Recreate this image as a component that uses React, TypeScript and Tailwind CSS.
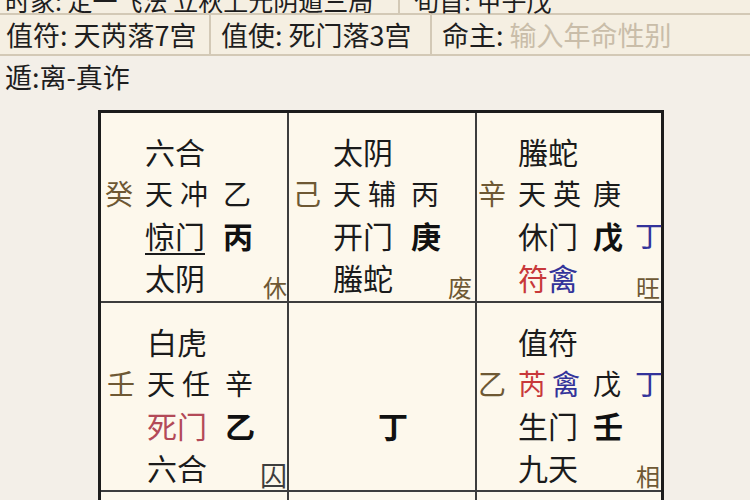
import type { ReactNode } from "react";

type RowProps = {
  stem?: ReactNode;
  main?: ReactNode;
  side?: ReactNode;
  far?: ReactNode;
  narrow?: boolean;
};

function Row({ stem, main, side, far, narrow }: RowProps) {
  return (
    <div
      className={`grid h-[42px] items-center leading-none ${
        narrow ? "grid-cols-[40px_75px_42px_1fr]" : "grid-cols-[40px_78px_36px_1fr]"
      }`}
    >
      <div className="text-[28px] text-[#6e5834]">{stem}</div>
      <div className="whitespace-nowrap">{main}</div>
      <div>{side}</div>
      <div>{far}</div>
    </div>
  );
}

const plain = "text-[30px] text-[#1b1b1b]";
const spaced = "text-[28px] tracking-[7px] text-[#1b1b1b]";
const light = "text-[28px] text-[#1b1b1b]";
const bold = "text-[30px] font-bold text-[#111]";
const blue = "text-[28px] text-[#33339a]";

function Corner({ text, right }: { text: string; right: string }) {
  return (
    <span className={`absolute bottom-[2px] text-[24px] leading-none text-[#6e5834] ${right}`}>{text}</span>
  );
}

export default function App() {
  return (
    <div className="h-[500px] w-[750px] overflow-hidden bg-[#f3efe8] font-['Noto_Sans_CJK_SC','Noto_Sans',sans-serif] text-[#1e1e1e]">
      {/* header */}
      <div className="bg-[#f5efe2]">
        <div className="-mt-[13px] flex h-[28px] border-b-2 border-[#d3c9b6] text-[25px] leading-none">
          <div className="flex w-[400px] items-center overflow-hidden border-r-2 border-[#d3c9b6] pl-[5px] whitespace-nowrap">
            时家: 定一飞法 立秋上元阴遁三局
          </div>
          <div className="flex items-center pl-[14px] whitespace-nowrap">旬首: 甲子戊</div>
        </div>
        <div className="flex h-[41px] border-b-2 border-[#d3c9b6] text-[27px] leading-none">
          <div className="flex w-[211px] items-center border-r-2 border-[#d3c9b6] pl-[6px] whitespace-nowrap">
            值符: 天芮落7宫
          </div>
          <div className="flex w-[221px] items-center border-r-2 border-[#d3c9b6] pl-[10px] whitespace-nowrap">
            值使: 死门落3宫
          </div>
          <div className="flex items-center pl-[10px] whitespace-nowrap">
            命主: <span className="ml-[6px] text-[#c9bda9]">输入年命性别</span>
          </div>
        </div>
      </div>
      <div className="flex h-[40px] items-center pl-[5px] text-[27px] leading-none">遁:离-真诈</div>

      {/* board */}
      <div className="ml-[98px] mt-[14px] w-[566px] border-[3px] border-[#1c1c1c] bg-[#fdf8ec]">
        <div className="grid grid-cols-[188px_188px_184px] grid-rows-[190px_189px_120px]">
          {/* top-left */}
          <div className="relative border-r-2 border-b-2 border-[#3d3d3d] pl-[4px] pt-[17px]">
            <Row main={<span className={plain}>六合</span>} />
            <Row stem="癸" main={<span className={spaced}>天冲</span>} side={<span className={light}>乙</span>} />
            <Row
              main={<span className={`${plain} underline decoration-2 underline-offset-[5px]`}>惊门</span>}
              side={<span className={bold}>丙</span>}
            />
            <Row main={<span className={plain}>太阴</span>} />
            <Corner text="休" right="right-0" />
          </div>
          {/* top-middle */}
          <div className="relative border-r-2 border-b-2 border-[#3d3d3d] pl-[4px] pt-[17px]">
            <Row main={<span className={plain}>太阴</span>} />
            <Row stem="己" main={<span className={spaced}>天辅</span>} side={<span className={light}>丙</span>} />
            <Row main={<span className={plain}>开门</span>} side={<span className={bold}>庚</span>} />
            <Row main={<span className={plain}>螣蛇</span>} />
            <Corner text="废" right="right-[3px]" />
          </div>
          {/* top-right */}
          <div className="relative border-b-2 border-[#3d3d3d] pl-[1px] pt-[17px]">
            <Row narrow main={<span className={plain}>螣蛇</span>} />
            <Row narrow stem="辛" main={<span className={spaced}>天英</span>} side={<span className={light}>庚</span>} />
            <Row
              narrow
              main={<span className={plain}>休门</span>}
              side={<span className={bold}>戊</span>}
              far={<span className={blue}>丁</span>}
            />
            <Row
              narrow
              main={
                <span className="text-[30px]">
                  <span className="text-[#c8383a]">符</span>
                  <span className="text-[#33339a]">禽</span>
                </span>
              }
            />
            <Corner text="旺" right="right-[1px]" />
          </div>

          {/* middle-left */}
          <div className="relative border-r-2 border-b-2 border-[#3d3d3d] pl-[6px] pt-[17px]">
            <Row main={<span className={plain}>白虎</span>} />
            <Row stem="壬" main={<span className={spaced}>天任</span>} side={<span className={light}>辛</span>} />
            <Row main={<span className="text-[30px] text-[#b34a58]">死门</span>} side={<span className={bold}>乙</span>} />
            <Row main={<span className={plain}>六合</span>} />
            <span className="absolute bottom-[2px] right-0 text-[27px] leading-none text-[#3e3e3e]">囚</span>
          </div>
          {/* center */}
          <div className="border-r-2 border-b-2 border-[#3d3d3d] pt-[17px]">
            <div className="h-[84px]" />
            <div className="flex h-[42px] items-center pl-[89px] leading-none">
              <span className={bold}>丁</span>
            </div>
          </div>
          {/* middle-right */}
          <div className="relative border-b-2 border-[#3d3d3d] pl-[1px] pt-[17px]">
            <Row narrow main={<span className={plain}>值符</span>} />
            <Row
              narrow
              stem="乙"
              main={
                <span className="text-[28px] tracking-[6px]">
                  <span className="text-[#c8383a]">芮</span>
                  <span className="text-[#33339a]">禽</span>
                </span>
              }
              side={<span className={light}>戊</span>}
              far={<span className={blue}>丁</span>}
            />
            <Row narrow main={<span className={plain}>生门</span>} side={<span className={bold}>壬</span>} />
            <Row narrow main={<span className={plain}>九天</span>} />
            <Corner text="相" right="right-[1px]" />
          </div>

          {/* bottom row (cut off) */}
          <div className="border-r-2 border-[#3d3d3d]" />
          <div className="border-r-2 border-[#3d3d3d]" />
          <div />
        </div>
      </div>
    </div>
  );
}
